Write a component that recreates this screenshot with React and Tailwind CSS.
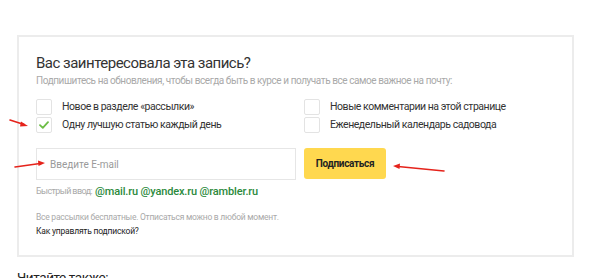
import React from "react";

function Box({ checked }) {
  return (
    <span className="flex h-[16px] w-[16px] shrink-0 items-center justify-center rounded-[2px] border border-[#e3e3e3] bg-white">
      {checked && (
        <svg width="10" height="8" viewBox="0 0 10 8">
          <path d="M1 4.2 L3.8 6.8 L9 1.2" fill="none" stroke="#6cbd45" strokeWidth="1.8" strokeLinecap="round" strokeLinejoin="round" />
        </svg>
      )}
    </span>
  );
}

function Row({ checked, children }) {
  return (
    <div className="flex h-[16px] items-center gap-[10px]">
      <Box checked={checked} />
      <span className="text-[10.5px] leading-[16px] tracking-[-0.45px] text-[#333]">{children}</span>
    </div>
  );
}

export default function App() {
  return (
    <div className="relative h-[278px] w-[600px] overflow-hidden bg-white font-['Roboto',sans-serif]">
      <div className="ml-[17px] mt-[35px] w-[557px] border-2 border-[#ececec] pl-[17px] pt-[15px] pb-[17px]">
        <div className="text-[15px] leading-[22px] tracking-[-0.5px] text-[#333]">Вас заинтересовала эта запись?</div>
        <div className="text-[10px] leading-[14px] tracking-[-0.43px] text-[#a9a9a9]">
          Подпишитесь на обновления, чтобы всегда быть в курсе и получать все самое важное на почту:
        </div>
        <div className="mt-[11px] grid grid-cols-[268px_1fr] gap-y-[2px]">
          <Row>Новое в разделе «рассылки»</Row>
          <Row>Новые комментарии на этой странице</Row>
          <Row checked>Одну лучшую статью каждый день</Row>
          <Row>Еженедельный календарь садовода</Row>
        </div>
        <div className="mt-[15px] flex gap-[8px]">
          <div className="flex h-[32px] w-[260px] items-center border border-[#e6e6e6] pl-[13px] text-[10px] text-[#9a9a9a]">
            Введите E-mail
          </div>
          <button className="h-[31px] w-[82px] rounded-[3px] bg-[#ffd84f] text-[10px] font-bold tracking-[-0.3px] text-[#222]">
            Подписаться
          </button>
        </div>
        <div className="mt-[4px] flex h-[16px] items-center gap-[3px]">
          <span className="text-[9px] tracking-[-0.6px] text-[#a9a9a9]">Быстрый ввод:</span>
          <span className="text-[11px] font-medium tracking-[-0.15px] text-[#2c8a3c]">@mail.ru @yandex.ru @rambler.ru</span>
        </div>
        <div className="mt-[10px] text-[8.5px] leading-[14px] tracking-[-0.25px] text-[#a9a9a9]">
          Все рассылки бесплатные. Отписаться можно в любой момент.
        </div>
        <div className="text-[8.5px] leading-[14px] tracking-[-0.2px] text-[#222]">Как управлять подпиской?</div>
      </div>
      <div className="ml-[17px] mt-[9px] text-[13.5px] leading-[22px] tracking-[-0.4px] text-[#222]">Читайте также:</div>

      <svg className="pointer-events-none absolute left-0 top-0" width="600" height="278">
        <g stroke="#e5231b" strokeWidth="1.6" fill="#e5231b" strokeLinecap="round">
          <line x1="10" y1="120" x2="24" y2="124.5" />
          <polygon points="28,126 21,121.5 20,126.5" stroke="none" />
          <line x1="15" y1="167" x2="40" y2="163.5" />
          <polygon points="45,163 38,160.5 38.5,166" stroke="none" />
          <line x1="444" y1="171" x2="398" y2="166.5" />
          <polygon points="393,166 400,163.5 399.5,169" stroke="none" />
        </g>
      </svg>
    </div>
  );
}
